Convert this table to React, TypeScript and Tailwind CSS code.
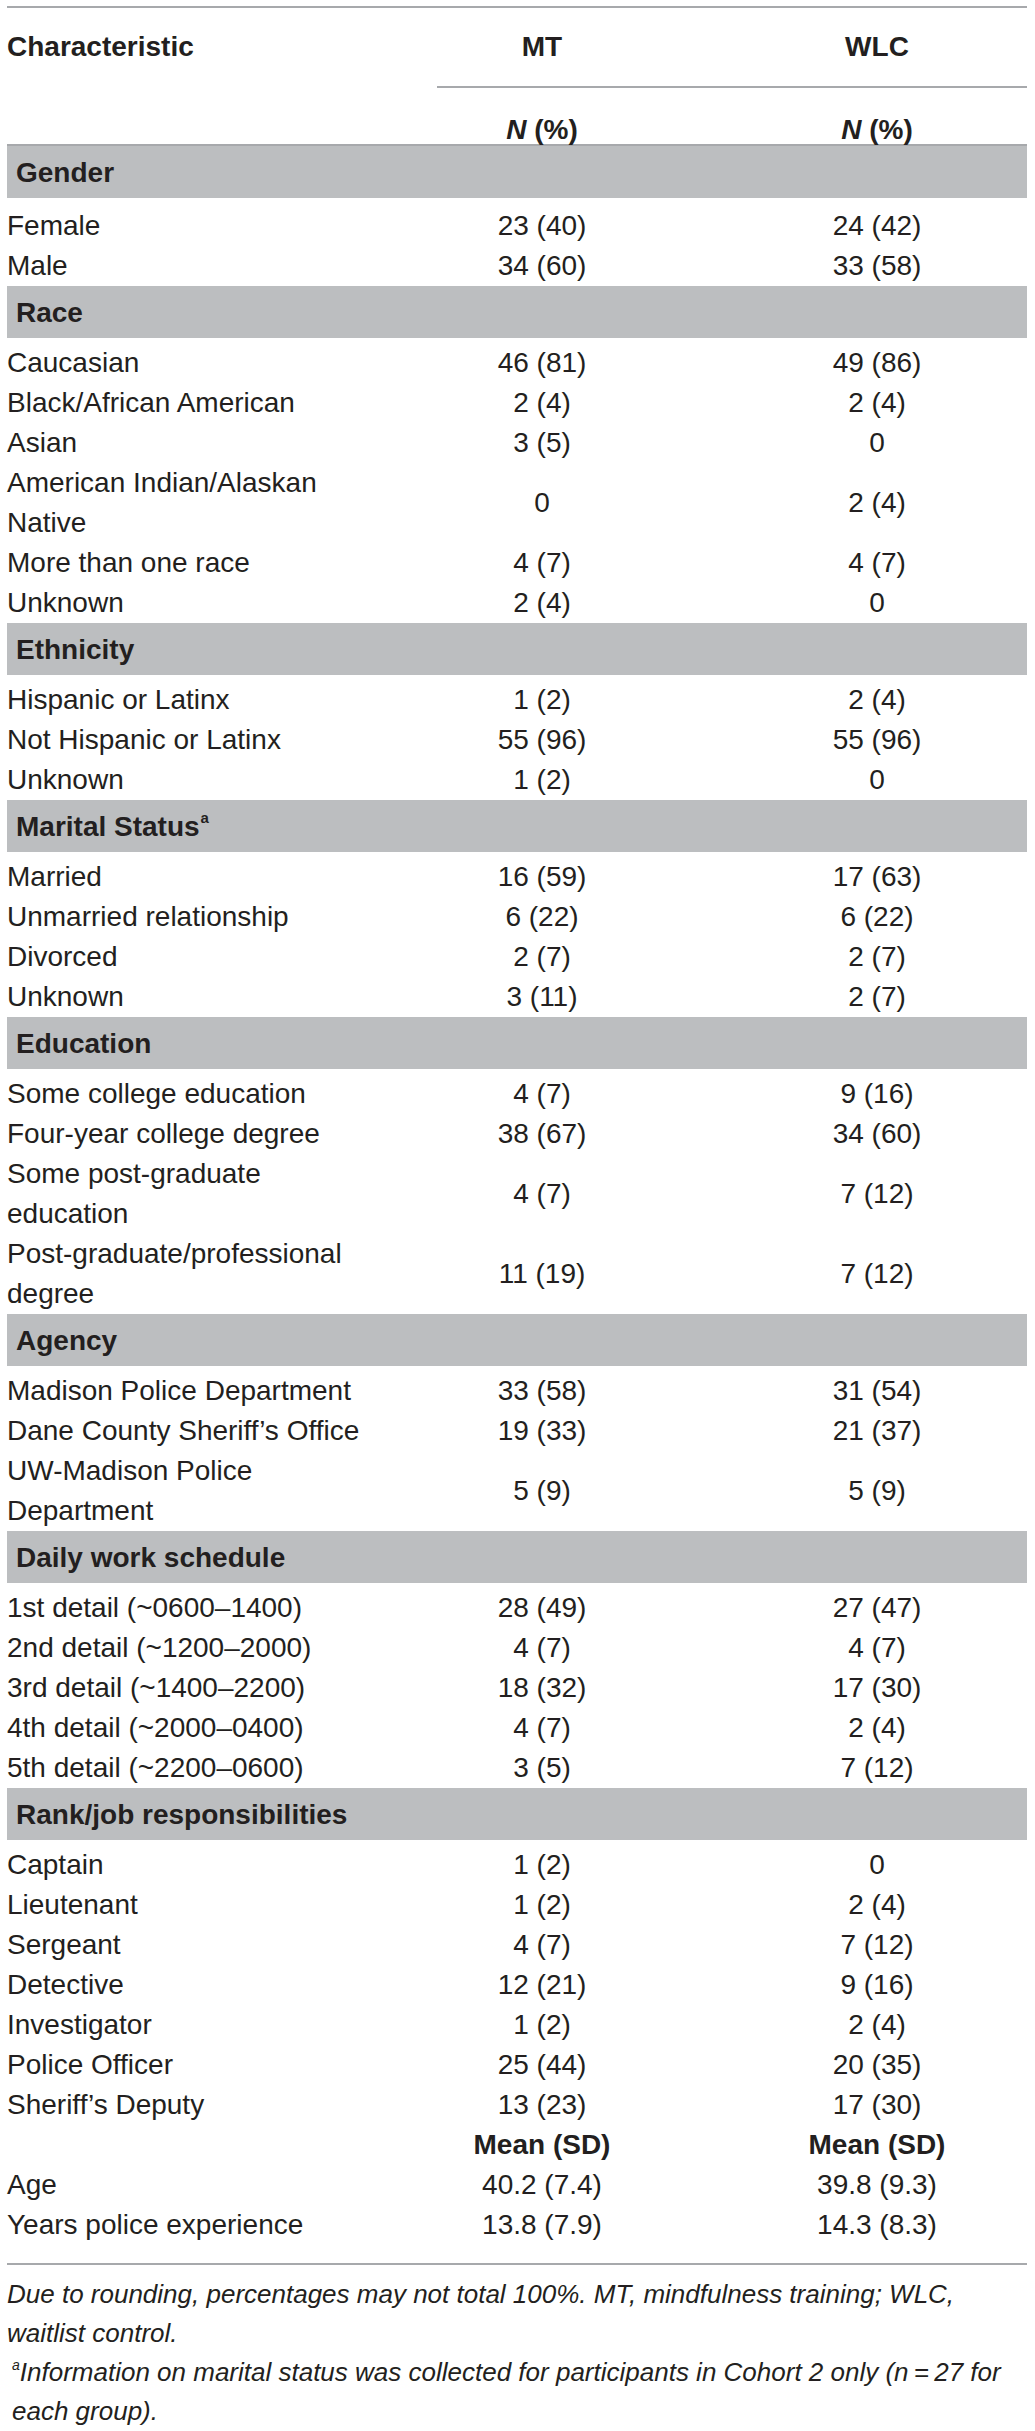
const sections: { title: string; sup?: string; first?: boolean; rows: [string, string, string][] }[] = [
  {
    title: "Gender",
    first: true,
    rows: [
      ["Female", "23 (40)", "24 (42)"],
      ["Male", "34 (60)", "33 (58)"],
    ],
  },
  {
    title: "Race",
    rows: [
      ["Caucasian", "46 (81)", "49 (86)"],
      ["Black/African American", "2 (4)", "2 (4)"],
      ["Asian", "3 (5)", "0"],
      ["American Indian/Alaskan Native", "0", "2 (4)"],
      ["More than one race", "4 (7)", "4 (7)"],
      ["Unknown", "2 (4)", "0"],
    ],
  },
  {
    title: "Ethnicity",
    rows: [
      ["Hispanic or Latinx", "1 (2)", "2 (4)"],
      ["Not Hispanic or Latinx", "55 (96)", "55 (96)"],
      ["Unknown", "1 (2)", "0"],
    ],
  },
  {
    title: "Marital Status",
    sup: "a",
    rows: [
      ["Married", "16 (59)", "17 (63)"],
      ["Unmarried relationship", "6 (22)", "6 (22)"],
      ["Divorced", "2 (7)", "2 (7)"],
      ["Unknown", "3 (11)", "2 (7)"],
    ],
  },
  {
    title: "Education",
    rows: [
      ["Some college education", "4 (7)", "9 (16)"],
      ["Four-year college degree", "38 (67)", "34 (60)"],
      ["Some post-graduate education", "4 (7)", "7 (12)"],
      ["Post-graduate/professional degree", "11 (19)", "7 (12)"],
    ],
  },
  {
    title: "Agency",
    rows: [
      ["Madison Police Department", "33 (58)", "31 (54)"],
      ["Dane County Sheriff\u2019s Office", "19 (33)", "21 (37)"],
      ["UW-Madison Police Department", "5 (9)", "5 (9)"],
    ],
  },
  {
    title: "Daily work schedule",
    rows: [
      ["1st detail (~0600\u20131400)", "28 (49)", "27 (47)"],
      ["2nd detail (~1200\u20132000)", "4 (7)", "4 (7)"],
      ["3rd detail (~1400\u20132200)", "18 (32)", "17 (30)"],
      ["4th detail (~2000\u20130400)", "4 (7)", "2 (4)"],
      ["5th detail (~2200\u20130600)", "3 (5)", "7 (12)"],
    ],
  },
  {
    title: "Rank/job responsibilities",
    rows: [
      ["Captain", "1 (2)", "0"],
      ["Lieutenant", "1 (2)", "2 (4)"],
      ["Sergeant", "4 (7)", "7 (12)"],
      ["Detective", "12 (21)", "9 (16)"],
      ["Investigator", "1 (2)", "2 (4)"],
      ["Police Officer", "25 (44)", "20 (35)"],
      ["Sheriff\u2019s Deputy", "13 (23)", "17 (30)"],
    ],
  },
];

const means: [string, string, string][] = [
  ["Age", "40.2 (7.4)", "39.8 (9.3)"],
  ["Years police experience", "13.8 (7.9)", "14.3 (8.3)"],
];

const grid = "grid grid-cols-[430px_210px_1fr] items-center";

const Row = ({ label, mt, wlc }: { label: string; mt: string; wlc: string }) => (
  <div className={`${grid} leading-[40px]`}>
    <div className="pr-[60px]">{label}</div>
    <div className="text-center">{mt}</div>
    <div className="text-center pl-[80px]">{wlc}</div>
  </div>
);

const App = () => {
  return (
    <div className="w-[1035px] bg-white pl-[7px] pr-[8px] pt-[6px] text-[28px] text-[#231f20] font-['Liberation_Sans',Arial,sans-serif]">
      <div className="h-[2px] bg-[#a7a9ac]" />
      <div className={`${grid} h-[78px] font-bold`}>
        <div>Characteristic</div>
        <div className="text-center">MT</div>
        <div className="text-center pl-[80px]">WLC</div>
      </div>
      <div className={grid}>
        <div />
        <div className="col-span-2 h-[2px] bg-[#a7a9ac]" />
      </div>
      <div className={`${grid} h-[56px] leading-[28px] font-bold`}>
        <div />
        <div className="text-center pt-[28px]">
          <i>N</i> (%)
        </div>
        <div className="text-center pl-[80px] pt-[28px]">
          <i>N</i> (%)
        </div>
      </div>
      <div className="h-[2px] bg-[#a7a9ac]" />

      {sections.map((s) => (
        <section key={s.title}>
          <div className="mt-[4px] first:mt-0 h-[52px] flex items-center pl-[9px] pt-[2px] bg-[#bcbec0] font-bold">
            {s.title}
            {s.sup && <sup className="text-[15px] -top-[0.6em] ml-[1px]">{s.sup}</sup>}
          </div>
          <div className={s.first ? "pt-[8px]" : "pt-[5px]"}>
            {s.rows.map((r, i) => (
              <Row key={i} label={r[0]} mt={r[1]} wlc={r[2]} />
            ))}
          </div>
        </section>
      ))}

      <div className={`${grid} leading-[40px] font-bold`}>
        <div />
        <div className="text-center">Mean (SD)</div>
        <div className="text-center pl-[80px]">Mean (SD)</div>
      </div>
      {means.map((r) => (
        <Row key={r[0]} label={r[0]} mt={r[1]} wlc={r[2]} />
      ))}

      <div className="mt-[18px] h-[2px] bg-[#a7a9ac]" />
      <div className="pt-[10px] italic text-[26px] leading-[39px]">
        <p>
          Due to rounding, percentages may not total 100%. MT, mindfulness training; WLC, waitlist
          control.
        </p>
        <p className="pl-[5px]">
          <sup className="text-[14px] -top-[0.8em]">a</sup>Information on marital status was
          collected for participants in Cohort 2 only (n{"\u2009"}={"\u2009"}27 for each group).
        </p>
      </div>
    </div>
  );
};

export default App;
